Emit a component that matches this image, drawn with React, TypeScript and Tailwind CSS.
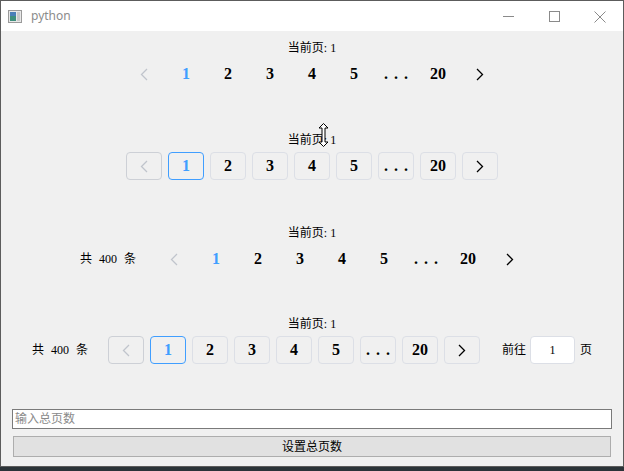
import React from 'react'

const cjk = { fontFamily: '"Liberation Serif", "Noto Sans CJK SC", serif' }
const num = { fontFamily: '"Liberation Serif", "Noto Sans CJK SC", serif' }

const pages = ['1', '2', '3', '4', '5', '...', '20']

function Chevron({ dir, color }: { dir: 'left' | 'right'; color: string }) {
  return (
    <svg width="8" height="13" viewBox="0 0 8 13" fill="none">
      <polyline
        points={dir === 'left' ? '7,1 1.5,6.5 7,12' : '1,1 6.5,6.5 1,12'}
        stroke={color}
        strokeWidth="1.3"
      />
    </svg>
  )
}

function Pager({ bordered }: { bordered: boolean }) {
  const box = 'w-[36px] h-[28px] flex items-center justify-center rounded-[4px] shrink-0'
  return (
    <div className="flex items-center gap-[6px]">
      <div className={`${box} ${bordered ? 'border border-[#cdd0d6]' : ''}`}>
        <Chevron dir="left" color="#c0c4cc" />
      </div>
      {pages.map((p, i) => (
        <div
          key={p}
          style={num}
          className={`${box} text-[16px] font-bold ${i === 0 ? 'text-[#409eff]' : 'text-black'} ${
            bordered ? (i === 0 ? 'border border-[#409eff]' : 'border border-[#dcdfe6]') : ''
          }`}
        >
          {p === '...' ? <span className="tracking-[6px] pl-[6px]">...</span> : p}
        </div>
      ))}
      <div className={`${box} ${bordered ? 'border border-[#dcdfe6]' : ''}`}>
        <Chevron dir="right" color="#000000" />
      </div>
    </div>
  )
}

function Current() {
  return (
    <div style={cjk} className="h-[14px] leading-[14px] text-[12px] text-black text-center">
      当前页: 1
    </div>
  )
}

function Total() {
  return (
    <div style={cjk} className="w-[76px] shrink-0 flex items-center gap-[7px] text-[12px] text-black">
      <span>共</span>
      <span>400</span>
      <span>条</span>
    </div>
  )
}

export default function App() {
  return (
    <div className="relative w-[624px] h-[471px] overflow-hidden bg-[#2b3338]">
      <div className="w-[624px] h-[467px] bg-[#f0f0f0] border border-[#5c5c5c] flex flex-col">
        {/* Title bar */}
        <div className="h-[30px] bg-white flex items-center shrink-0">
          <svg className="ml-[7px]" width="14" height="13" viewBox="0 0 14 13">
            <rect x="0.5" y="0.5" width="13" height="12" fill="#e8e8e8" stroke="#9a9a9a" />
            <rect x="2" y="2" width="6" height="9" fill="#3f8f7d" />
            <rect x="2" y="2" width="6" height="4" fill="#4a7fb8" />
            <rect x="9" y="2" width="3" height="9" fill="#c9c9c9" />
          </svg>
          <span
            className="ml-[9px] text-[12px] text-[#8c8c8c]"
            style={{ fontFamily: '"Noto Sans", "Liberation Sans", sans-serif' }}
          >
            python
          </span>
          <div className="ml-auto flex items-center">
            <svg width="46" height="30" viewBox="0 0 46 30">
              <line x1="18" y1="15.5" x2="29" y2="15.5" stroke="#8a8a8a" strokeWidth="1" />
            </svg>
            <svg width="46" height="30" viewBox="0 0 46 30">
              <rect x="18.5" y="10.5" width="10" height="10" fill="none" stroke="#8a8a8a" strokeWidth="1" />
            </svg>
            <svg width="46" height="30" viewBox="0 0 46 30">
              <path d="M17.5 10.5 L28.5 21.5 M28.5 10.5 L17.5 21.5" stroke="#8a8a8a" strokeWidth="1" />
            </svg>
          </div>
        </div>

        {/* Plain pager */}
        <div className="mt-[10px]">
          <Current />
        </div>
        <div className="mt-[5px] flex justify-center">
          <Pager bordered={false} />
        </div>

        {/* Bordered pager */}
        <div className="mt-[45px]">
          <Current />
        </div>
        <div className="mt-[5px] flex justify-center">
          <Pager bordered />
        </div>

        {/* Total + plain pager */}
        <div className="mt-[46px]">
          <Current />
        </div>
        <div className="mt-[5px] flex items-center pl-[79px]">
          <Total />
          <Pager bordered={false} />
        </div>

        {/* Total + bordered pager + jumper */}
        <div className="mt-[44px]">
          <Current />
        </div>
        <div className="mt-[5px] flex items-center pl-[31px]">
          <Total />
          <Pager bordered />
          <span style={cjk} className="ml-[22px] text-[12px] text-black">
            前往
          </span>
          <div
            style={cjk}
            className="ml-[4px] w-[45px] h-[28px] bg-white rounded-[4px] border border-[#dcdfe6] flex items-center justify-center text-[12px] text-black"
          >
            1
          </div>
          <span style={cjk} className="ml-[5px] text-[12px] text-black">
            页
          </span>
        </div>

        {/* Bottom controls */}
        <div className="mt-[45px] px-[11px]">
          <div
            style={cjk}
            className="h-[20px] bg-white border border-[#7a7a7a] flex items-center pl-[2px] text-[12px] text-[#8a8a8a]"
          >
            输入总页数
          </div>
        </div>
        <div className="mt-[7px] px-[12px]">
          <div
            style={cjk}
            className="h-[21px] bg-[#e1e1e1] border border-[#adadad] flex items-center justify-center text-[12px] text-black"
          >
            设置总页数
          </div>
        </div>
      </div>

      {/* Mouse cursor over the second label */}
      <svg className="absolute left-[318px] top-[123px]" width="11" height="24" viewBox="0 0 11 24">
        <path
          d="M5.5 0.5 L10 5 L7 5 L7 19 L10 19 L5.5 23.5 L1 19 L4 19 L4 5 L1 5 Z"
          fill="#ffffff"
          stroke="#000000"
          strokeWidth="1"
        />
      </svg>
    </div>
  )
}
